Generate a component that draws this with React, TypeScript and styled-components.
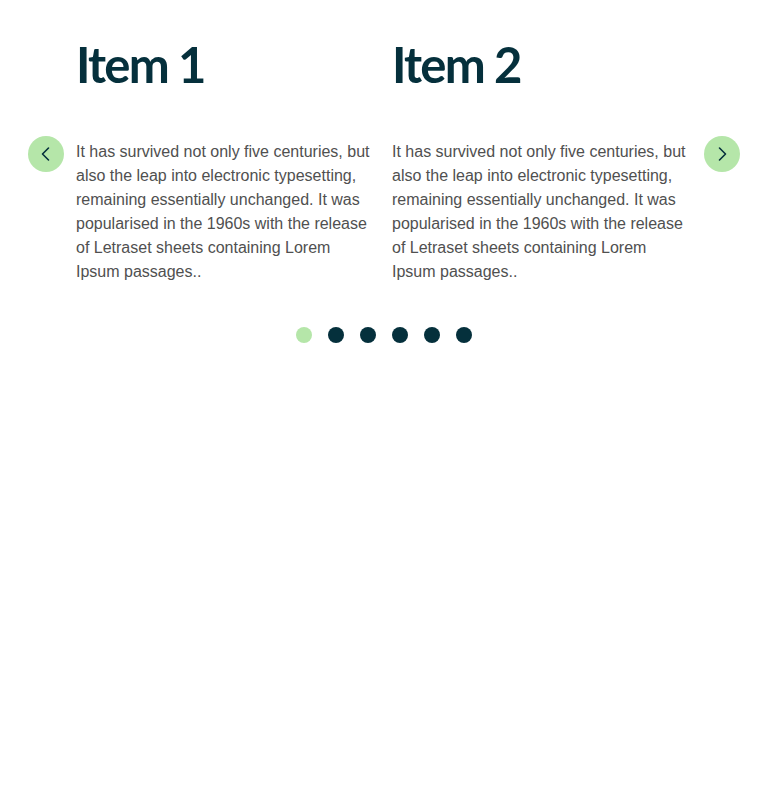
import React, { useState } from "react";
import styled, { createGlobalStyle } from "styled-components";

const GlobalStyle = createGlobalStyle`
  body {
    margin: 0;
    background: #ffffff;
    font-family: "Liberation Sans", Arial, sans-serif;
  }
`;

const Page = styled.div`
  width: 768px;
  padding-top: 36px;
`;

const Carousel = styled.div`
  display: flex;
  align-items: flex-start;
  padding-left: 28px;
`;

const Arrow = styled.button<{ $side: "left" | "right" }>`
  flex: none;
  width: 36px;
  height: 36px;
  margin-top: 100px;
  margin-left: ${(p) => (p.$side === "right" ? "-4px" : "0")};
  margin-right: ${(p) => (p.$side === "left" ? "12px" : "0")};
  border: none;
  border-radius: 50%;
  background: #b5e6a9;
  display: flex;
  align-items: center;
  justify-content: center;
  padding: 0;
  cursor: pointer;
  color: #05303c;
`;

const Track = styled.div`
  display: flex;
  width: 632px;
`;

const Slide = styled.div`
  width: 316px;
  box-sizing: border-box;
  padding-right: 16px;
`;

const Title = styled.h2`
  margin: 0 0 48px;
  font-family: Lato, "Open Sans", sans-serif;
  font-weight: 700;
  font-size: 49px;
  line-height: 56px;
  letter-spacing: -1.8px;
  color: #05303c;
`;

const Body = styled.p`
  margin: 0;
  font-size: 16px;
  line-height: 24px;
  color: #505050;
`;

const Dots = styled.div`
  display: flex;
  justify-content: center;
  gap: 16px;
  margin-top: 43px;
`;

const Dot = styled.button<{ $active: boolean }>`
  width: 16px;
  height: 16px;
  padding: 0;
  border: none;
  border-radius: 50%;
  background: ${(p) => (p.$active ? "#b5e6a9" : "#05303c")};
  cursor: pointer;
`;

const text =
  "It has survived not only five centuries, but also the leap into electronic typesetting, remaining essentially unchanged. It was popularised in the 1960s with the release of Letraset sheets containing Lorem Ipsum passages..";

const items = [1, 2, 3, 4, 5, 6, 7].map((n) => ({ title: `Item ${n}`, body: text }));

const Chevron = ({ dir }: { dir: "left" | "right" }) => (
  <svg width="14" height="16" viewBox="0 0 14 16" fill="none">
    <path
      d={dir === "left" ? "M9.5 2 L3.5 8 L9.5 14" : "M4.5 2 L10.5 8 L4.5 14"}
      stroke="currentColor"
      strokeWidth="1.6"
      strokeLinecap="round"
      strokeLinejoin="round"
    />
  </svg>
);

export default function App() {
  const [page, setPage] = useState(0);
  const pages = 6;
  const shown = items.slice(page, page + 2);

  return (
    <Page>
      <GlobalStyle />
      <Carousel>
        <Arrow $side="left" aria-label="Previous" onClick={() => setPage((p) => (p + pages - 1) % pages)}>
          <Chevron dir="left" />
        </Arrow>
        <Track>
          {shown.map((it) => (
            <Slide key={it.title}>
              <Title>{it.title}</Title>
              <Body>{it.body}</Body>
            </Slide>
          ))}
        </Track>
        <Arrow $side="right" aria-label="Next" onClick={() => setPage((p) => (p + 1) % pages)}>
          <Chevron dir="right" />
        </Arrow>
      </Carousel>
      <Dots>
        {Array.from({ length: pages }).map((_, i) => (
          <Dot key={i} $active={i === page} onClick={() => setPage(i)} aria-label={`Go to slide ${i + 1}`} />
        ))}
      </Dots>
    </Page>
  );
}
